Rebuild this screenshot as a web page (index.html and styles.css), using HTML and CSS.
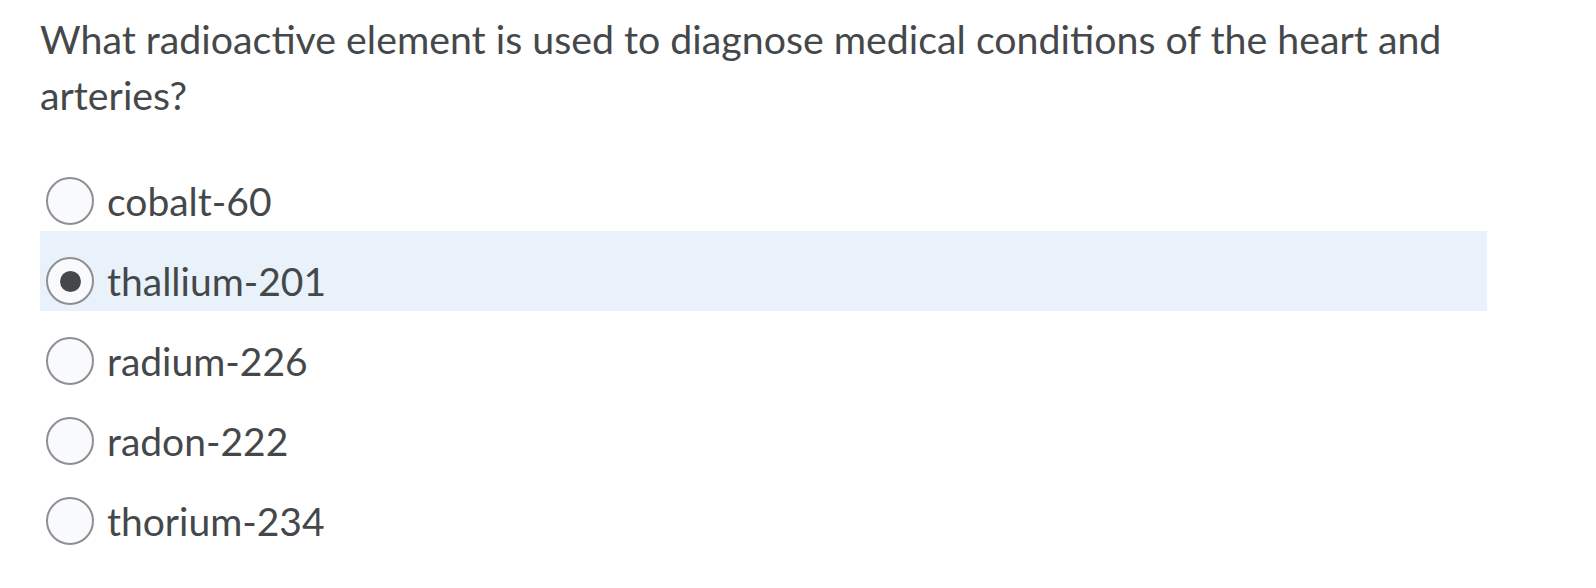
FILE: index.html
```html
<!DOCTYPE html>
<html>
<head>
<meta charset="utf-8">
<link rel="stylesheet" href="styles.css">
</head>
<body>
<div class="quiz">
  <div class="question">What radioactive element is used to diagnose medical conditions of the heart and arteries?</div>
  <div class="options">
    <label class="option"><span class="radio"></span><span class="label">cobalt-60</span></label>
    <label class="option selected"><span class="radio checked"></span><span class="label">thallium-201</span></label>
    <label class="option"><span class="radio"></span><span class="label">radium-226</span></label>
    <label class="option"><span class="radio"></span><span class="label">radon-222</span></label>
    <label class="option"><span class="radio"></span><span class="label">thorium-234</span></label>
  </div>
</div>
</body>
</html>
```
FILE: styles.css
```css
html, body {
  margin: 0;
  padding: 0;
  background: #ffffff;
}
body {
  font-family: Lato, "Open Sans", sans-serif;
  color: #45484a;
}
.quiz {
  padding: 11px 0 0 40px;
  width: 1447px;
}
.question {
  font-size: 39.3px;
  line-height: 56px;
  width: 1430px;
}
.options {
  margin-top: 28px;
  display: flex;
  flex-direction: column;
}
.option {
  height: 80px;
  box-sizing: border-box;
  padding: 26px 0 0 6px;
  display: flex;
  align-items: flex-start;
  gap: 13px;
}
.option.selected {
  background: #e9f1fb;
}
.radio {
  width: 48px;
  height: 48px;
  box-sizing: border-box;
  border: 2px solid #8f8f8f;
  border-radius: 50%;
  background: #f9fafe;
  display: flex;
  align-items: center;
  justify-content: center;
  flex: none;
}
.radio.checked::after {
  content: "";
  width: 21px;
  height: 21px;
  border-radius: 50%;
  background: #45484a;
}
.label {
  font-size: 39px;
  line-height: 48px;
}
```
